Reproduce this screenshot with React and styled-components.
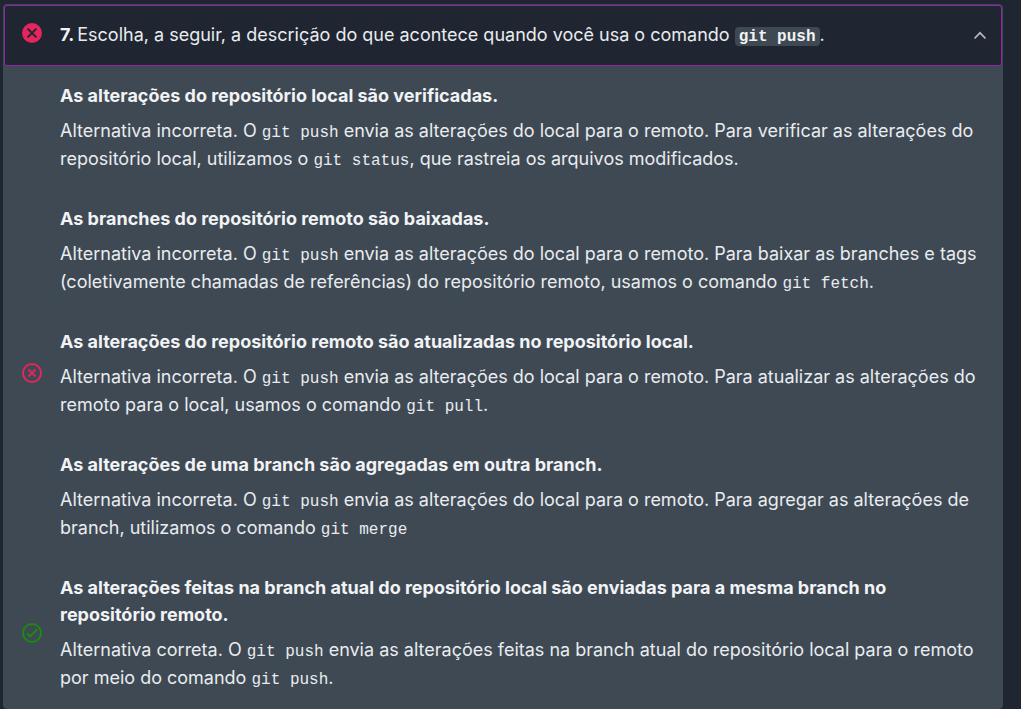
import React, { useState } from "react";
import styled, { createGlobalStyle } from "styled-components";

const GlobalStyle = createGlobalStyle`
  *, *::before, *::after { box-sizing: border-box; }
  body {
    margin: 0;
    background: #202631;
    color: #e9ecef;
    font-family: Inter, "Noto Sans", sans-serif;
    font-size: 18px;
    line-height: 28px;
  }
`;

const Page = styled.main`
  padding: 4px 18px 0 3px;
`;

const Accordion = styled.section`
  border: 1px solid #3f4954;
  border-radius: 4px;
  background: #3f4954;
`;

const Heading = styled.h2`
  margin: 0;
  font: inherit;
`;

const Header = styled.button`
  display: flex;
  align-items: center;
  gap: 18px;
  width: 100%;
  padding: 15px 14px 16px 17px;
  border: 1px solid #9224a7;
  border-radius: 3px;
  background: #202631;
  color: inherit;
  font: inherit;
  text-align: left;
  cursor: pointer;
`;

const Question = styled.span`
  flex: 1;
`;

const Number = styled.strong`
  margin-right: 3px;
  color: #f1f3f5;
  font-weight: 700;
`;

const Badge = styled.code`
  padding: 1px 4px 0;
  border-radius: 4px;
  background: #3f4954;
  color: #f1f3f5;
  font: bold 16px "Liberation Mono", monospace;
`;

const Code = styled.code`
  font-family: "Liberation Mono", monospace;
  font-size: 16px;
  line-height: 20px;
`;

const Answers = styled.ul`
  margin: 0;
  padding: 0 24px 0 18px;
  list-style: none;
`;

const Answer = styled.li`
  display: flex;
  align-items: center;
  gap: 18px;
  padding: 16px 0;
`;

const Marker = styled.span`
  display: flex;
  flex: none;
  width: 20px;
  padding-bottom: ${({ $lift }) => $lift || 1}px;
`;

const Content = styled.div`
  flex: 1;
`;

const Title = styled.h3`
  margin: 0 0 8px;
  color: #f1f3f5;
  font-size: 18px;
  font-weight: 700;
  line-height: 27px;
`;

const Explanation = styled.p`
  margin: 0;
`;

const WrongFilled = () => (
  <svg width="20" height="20" viewBox="0 0 20 20" fill="none" aria-hidden="true">
    <circle cx="10" cy="10" r="10" fill="#e5265c" />
    <path d="M5.6 5.6 14.4 14.4M14.4 5.6 5.6 14.4" stroke="#202631" strokeWidth="2" />
  </svg>
);

const WrongOutline = () => (
  <svg width="20" height="20" viewBox="0 0 20 20" fill="none" stroke="#e5265c" aria-label="Incorreta" role="img">
    <circle cx="10" cy="10" r="9" strokeWidth="2" />
    <path d="M6.5 6.5 13.5 13.5M13.5 6.5 6.5 13.5" strokeWidth="2" />
  </svg>
);

const RightOutline = () => (
  <svg width="20" height="20" viewBox="0 0 20 20" fill="none" stroke="#198a13" aria-label="Correta" role="img">
    <circle cx="10" cy="10" r="9" strokeWidth="2" />
    <path d="M5 10.2 8.2 13.4 15.2 6.2" strokeWidth="2" />
  </svg>
);

const Chevron = () => (
  <svg width="14" height="14" viewBox="0 0 14 14" fill="none" aria-hidden="true">
    <path d="M1.5 10.5 7 4.8 12.5 10.5" stroke="#b5b9bf" strokeWidth="1.7" />
  </svg>
);

const push = <Code>git push</Code>;

const answers = [
  {
    title: "As alterações do repositório local são verificadas.",
    body: <>Alternativa incorreta. O {push} envia as alterações do local para o remoto. Para verificar as alterações do repositório local, utilizamos o <Code>git status</Code>, que rastreia os arquivos modificados.</>,
  },
  {
    title: "As branches do repositório remoto são baixadas.",
    body: <>Alternativa incorreta. O {push} envia as alterações do local para o remoto. Para baixar as branches e tags (coletivamente chamadas de referências) do repositório remoto, usamos o comando <Code>git fetch</Code>.</>,
  },
  {
    title: "As alterações do repositório remoto são atualizadas no repositório local.",
    icon: <WrongOutline />,
    body: <>Alternativa incorreta. O {push} envia as alterações do local para o remoto. Para atualizar as alterações do remoto para o local, usamos o comando <Code>git pull</Code>.</>,
  },
  {
    title: "As alterações de uma branch são agregadas em outra branch.",
    body: <>Alternativa incorreta. O {push} envia as alterações do local para o remoto. Para agregar as alterações de branch, utilizamos o comando <Code>git merge</Code></>,
  },
  {
    title: "As alterações feitas na branch atual do repositório local são enviadas para a mesma branch no repositório remoto.",
    icon: <RightOutline />,
    body: <>Alternativa correta. O {push} envia as alterações feitas na branch atual do repositório local para o remoto por meio do comando {push}.</>,
  },
];

export default function App() {
  const [open, setOpen] = useState(true);
  return (
    <>
      <GlobalStyle />
      <Page>
        <Accordion>
          <Heading>
            <Header type="button" aria-expanded={open} onClick={() => setOpen(!open)}>
              <Marker $lift={4}><WrongFilled /></Marker>
              <Question>
                <Number>7.</Number>Escolha, a seguir, a descrição do que acontece quando você usa o comando <Badge>git push</Badge>.
              </Question>
              <Chevron />
            </Header>
          </Heading>
          {open && (
            <Answers>
              {answers.map((answer) => (
                <Answer key={answer.title}>
                  <Marker>{answer.icon}</Marker>
                  <Content>
                    <Title>{answer.title}</Title>
                    <Explanation>{answer.body}</Explanation>
                  </Content>
                </Answer>
              ))}
            </Answers>
          )}
        </Accordion>
      </Page>
    </>
  );
}
